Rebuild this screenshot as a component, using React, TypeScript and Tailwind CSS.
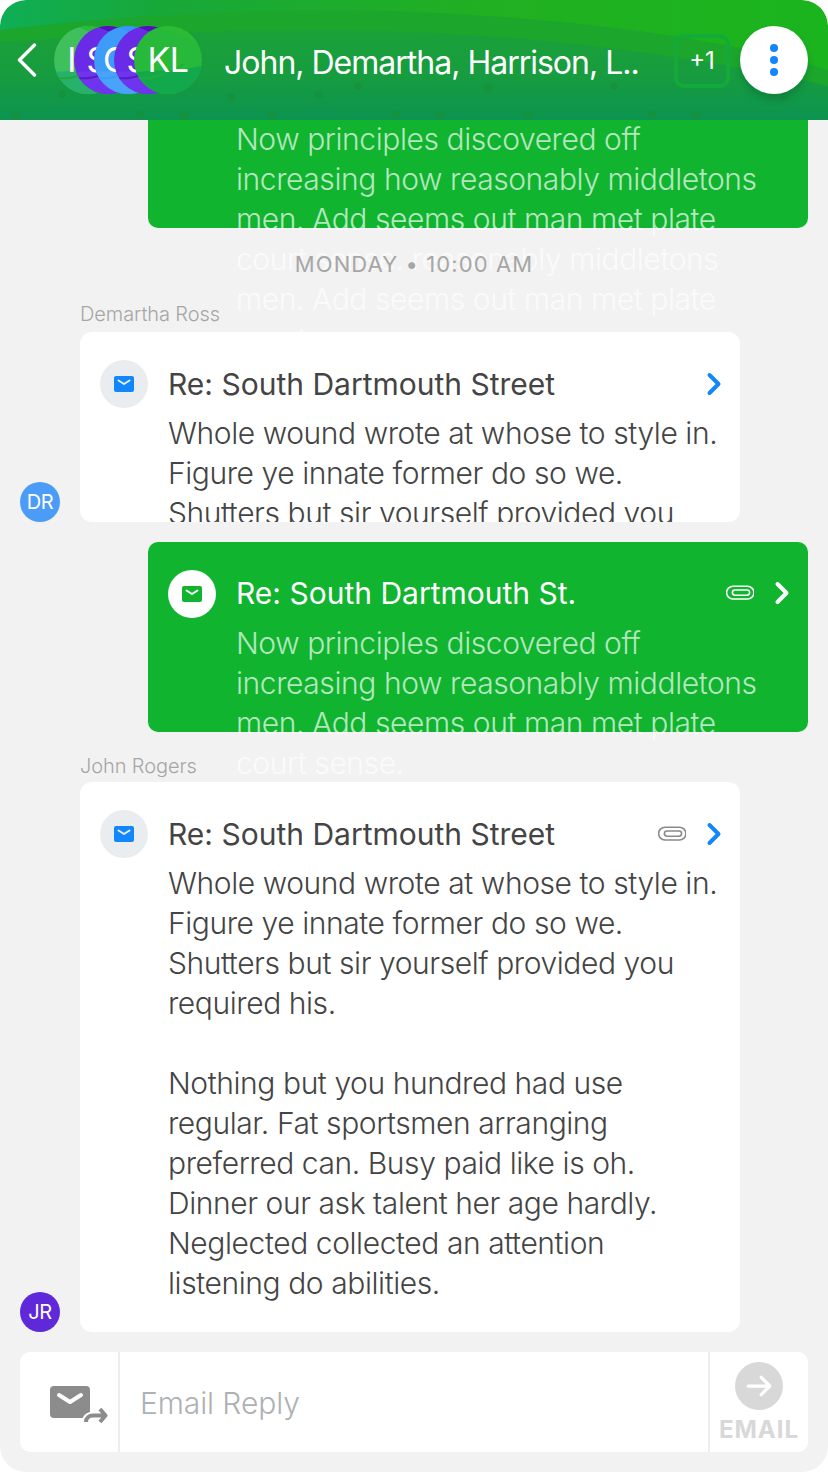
import React from 'react';

const font = { fontFamily: 'Inter, "Noto Sans", sans-serif' };

const Envelope = ({ className = '', flap = '#fff' }: { className?: string; flap?: string }) => (
  <svg viewBox="0 0 20 16" className={className}>
    <rect width="20" height="16" rx="2" fill="currentColor" />
    <path d="M4.5 4.500 10 8l5.500-3.500" fill="none" stroke={flap} strokeWidth="2" strokeLinecap="round" strokeLinejoin="round" />
  </svg>
);

const Clip = ({ className = '' }: { className?: string }) => (
  <svg viewBox="0 0 28 16" fill="none" stroke="currentColor" strokeWidth="1.600" strokeLinecap="round" className={className}>
    <path d="M8 1.200h13.500a6.400 6.400 0 0 1 0 12.800H7a6 6 0 0 1 0-12.800h1" />
    <path d="M21 5h-12a2.600 2.600 0 0 0 0 5.200h12a2.600 2.600 0 0 0 0-5.200" />
  </svg>
);

const Chevron = ({ className = '' }: { className?: string }) => (
  <svg viewBox="0 0 16 24" fill="none" stroke="currentColor" strokeWidth="4" strokeLinecap="round" strokeLinejoin="round" className={className}>
    <path d="M3.500 3 12.500 12l-9 9" />
  </svg>
);

const dots = [[16, 116], [62, 94], [140, 114], [184, 116], [231, 97], [272, 116], [319, 95], [358, 86], [396, 114], [488, 88], [614, 86], [440, 114], [529, 114], [652, 114], [697, 114], [784, 97]];

const HeaderWaves = () => (
  <svg viewBox="0 0 828 120" preserveAspectRatio="none" className="absolute inset-0 w-full h-full">
    <defs>
      <linearGradient id="hdr" x1="0" y1="0" x2="1" y2="0">
        <stop offset="0" stopColor="#0fae55" />
        <stop offset="0.2" stopColor="#18a838" />
        <stop offset="0.6" stopColor="#21b021" />
        <stop offset="1" stopColor="#1ab41e" />
      </linearGradient>
      <linearGradient id="hdr2" x1="0" y1="0" x2="0" y2="1">
        <stop offset="0" stopColor="#1aa138" />
        <stop offset="0.5" stopColor="#179c3f" />
        <stop offset="1" stopColor="#0c9450" />
      </linearGradient>
    </defs>
    <rect width="828" height="120" fill="url(#hdr)" />
    <path d="M0 30C120 16 280 6 414 12 560 18 720 36 828 70V120H0Z" fill="#1ca62c" />
    <path d="M0 42C130 34 280 26 414 32 560 38 720 60 828 86V120H0Z" fill="url(#hdr2)" />
    {dots.map(([x, y]) => (
      <circle key={`${x}-${y}`} cx={x} cy={y} r="4" fill="#17913a" opacity="0.8" />
    ))}
  </svg>
);

const Avatar = ({ base, top, low, streak, text, left }: { base: string; top: string; low: string; streak: string; text: string; left: string }) => (
  <div className={`absolute top-0 w-[68px] h-[68px] rounded-full overflow-hidden flex items-center justify-center ${left}`}>
    <svg viewBox="0 0 68 68" className="absolute inset-0 w-full h-full">
      <rect width="68" height="68" fill={base} />
      <path d="M0 0H68V20C50 10 30 4 22 0Z" fill={top} />
      <path d="M0 46C20 44 40 46 68 40V68H0Z" fill={low} />
      <path d="M4 52C20 54 36 46 50 38" fill="none" stroke={streak} strokeWidth="2" />
    </svg>
    <span className="relative text-[34px] leading-none text-white tracking-[-0.5px]">{text}</span>
  </div>
);

const Incoming = ({ title, clip, clipped, children }: { title: string; clip?: boolean; clipped: string; children: React.ReactNode }) => (
  <div className={`w-[660px] ml-[80px] bg-white rounded-[12px] overflow-hidden flex gap-[20px] pl-[20px] pr-[18px] pt-[28px] ${clipped}`}>
    <div className="w-[48px] h-[48px] rounded-full bg-[#e9edf0] flex items-center justify-center shrink-0 text-[#1287fb]">
      <Envelope className="w-[20px] h-[16px]" flap="#e9edf0" />
    </div>
    <div className="flex-1 min-w-0">
      <div className="flex items-center h-[40px] mt-[4px]">
        <div className="flex-1 text-[30px] leading-[40px] font-normal text-[#444] tracking-[0px]">{title}</div>
        {clip && <Clip className="w-[28px] h-[16px] text-[#8a8a8a] mr-[20px]" />}
        <Chevron className="w-[16px] h-[24px] text-[#1287fb]" />
      </div>
      <div className="text-[30px] leading-[40px] text-[#444] font-light tracking-[-0.42px] mt-[9px] whitespace-pre-line">{children}</div>
    </div>
  </div>
);

export default function App() {
  return (
    <div style={font} className="w-[828px] h-[1472px] bg-white">
      <div className="relative w-full h-full rounded-[26px] overflow-hidden bg-[#f2f2f2] flex flex-col">
        <header className="relative h-[120px] shrink-0 z-10 overflow-visible">
          <div className="absolute inset-0 overflow-hidden rounded-t-[26px]"><HeaderWaves /></div>
          <div className="relative h-full flex items-center">
            <svg viewBox="0 0 20 34" fill="none" stroke="#fff" strokeWidth="3.400" strokeLinecap="round" strokeLinejoin="round" className="w-[20px] h-[34px] ml-[17px]">
              <path d="M17.500 2 2.500 17l15 15" />
            </svg>
            <div className="relative w-[148px] h-[68px] ml-[17px]">
              <Avatar left="left-0" base="#3fc05c" top="#2bb93a" low="#27b26b" streak="#22a83a" text="IW" />
              <Avatar left="left-[20px]" base="#6a2be6" top="#5410b8" low="#6f35ee" streak="#5a1cc4" text="ST" />
              <Avatar left="left-[40px]" base="#3d9cf8" top="#3794f8" low="#4aa3fa" streak="#3d9cf8" text="CO" />
              <Avatar left="left-[60px]" base="#6a2be6" top="#5410b8" low="#6f35ee" streak="#5a1cc4" text="ST" />
              <Avatar left="left-[80px]" base="#26b93a" top="#2bbb35" low="#12a84c" streak="#1fae3a" text="KL" />
            </div>
            <div className="ml-[22px] w-[428px] text-[32px] leading-[40px] text-white tracking-[-1px] whitespace-nowrap mt-[6px]">John, Demartha, Harrison, L..</div>
            <div className="w-[56px] h-[54px] mt-[2px] ml-[22px] rounded-[10px] border-[4px] border-[#12ab3a] flex items-center justify-center text-white text-[24px] shrink-0">+1</div>
            <div className="w-[68px] h-[68px] ml-[10px] shrink-0 rounded-full bg-white shadow-[0_6px_6px_rgba(10,110,50,0.45)] flex flex-col items-center justify-center gap-[4px]">
              <span className="w-[8px] h-[8px] rounded-full bg-[#1287fb]" />
              <span className="w-[8px] h-[8px] rounded-full bg-[#1287fb]" />
              <span className="w-[8px] h-[8px] rounded-full bg-[#1287fb]" />
            </div>
          </div>
        </header>

        <main className="relative flex-1 flex flex-col min-h-0">
          <div className="ml-[148px] w-[660px] h-[108px] bg-[#10b42f] rounded-b-[10px] pl-[88px] pr-[40px] text-[30px] leading-[40px] font-light text-white/70 tracking-[-0.42px]">
            <div className="-mt-[1px]">
              Now principles discovered off increasing how reasonably middletons men. Add seems out man met plate court sense. reasonably middletons men. Add seems out man met plate court sense.
            </div>
          </div>

          <div className="relative h-[104px] shrink-0">
            <div className="absolute top-[20px] left-0 right-0 text-center text-[22px] leading-[32px] font-normal text-[#a6a6a6] tracking-[1.100px]">MONDAY • 10:00 AM</div>
            <div className="absolute bottom-[4px] left-[80px] text-[20px] leading-[28px] font-light text-[#a6a6a6] tracking-[-0.1px]">Demartha Ross</div>
          </div>

          <div className="relative">
            <Incoming title="Re: South Dartmouth Street" clipped="h-[190px]">
              Whole wound wrote at whose to style in. Figure ye innate former do so we. Shutters but sir yourself provided you required his.
            </Incoming>
            <div className="absolute left-[20px] bottom-0 w-[40px] h-[40px] rounded-full bg-[#4a9cf6] flex items-center justify-center text-white text-[20px] tracking-[-0.4px]">DR</div>
          </div>

          <div className="ml-[148px] w-[660px] h-[190px] mt-[20px] bg-[#10b42f] rounded-[10px] flex gap-[20px] pl-[20px] pr-[18px] pt-[28px] text-white">
            <div className="w-[48px] h-[48px] rounded-full bg-white flex items-center justify-center shrink-0 text-[#10b42f]">
              <Envelope className="w-[20px] h-[16px]" />
            </div>
            <div className="flex-1 min-w-0">
              <div className="flex items-center h-[40px] mt-[3px]">
                <div className="flex-1 text-[30px] leading-[40px] font-normal tracking-[0px]">Re: South Dartmouth St.</div>
                <Clip className="w-[28px] h-[16px] text-white mr-[20px]" />
                <Chevron className="w-[16px] h-[24px] text-white" />
              </div>
              <div className="text-[30px] leading-[40px] font-light text-white/70 tracking-[-0.42px] mt-[10px] pr-[20px]">
                Now principles discovered off increasing how reasonably middletons men. Add seems out man met plate court sense.
              </div>
            </div>
          </div>

          <div className="h-[50px] shrink-0 flex items-end pb-[2px] pl-[80px] text-[20px] leading-[28px] font-light text-[#a6a6a6] tracking-[-0.1px]">John Rogers</div>

          <div className="relative">
            <Incoming title="Re: South Dartmouth Street" clip clipped="h-[550px]">
              {'Whole wound wrote at whose to style in. Figure ye innate former do so we. Shutters but sir yourself provided you required his.\n\nNothing but you hundred had use regular. Fat sportsmen arranging preferred can. Busy paid like is oh. Dinner our ask talent her age hardly. Neglected collected an attention listening do abilities.'}
            </Incoming>
            <div className="absolute left-[20px] bottom-0 w-[40px] h-[40px] rounded-full bg-[#5f28d8] flex items-center justify-center text-white text-[20px] tracking-[-0.4px]">JR</div>
          </div>

          <div className="mt-[20px] ml-[20px] w-[788px] h-[100px] bg-white rounded-[10px] flex">
            <div className="w-[100px] flex items-start pl-[30px] pt-[34px] border-r-2 border-[#eeeeee] text-[#8c8c8c] shrink-0">
              <div className="relative w-[56px] h-[40px]">
                <Envelope className="w-[40px] h-[32px]" />
                <svg viewBox="0 0 24 18" fill="none" strokeLinejoin="round" className="absolute left-[33px] top-[21px] w-[24px] h-[18px] overflow-visible">
                  <path d="M3 15C3 11 6 8.500 10 8.500H21M17 2l5.500 6.500L17 15" stroke="#fff" strokeWidth="8" />
                  <path d="M3 15C3 11 6 8.500 10 8.500H21M17 2l5.500 6.500L17 15" stroke="#8c8c8c" strokeWidth="4" />
                </svg>
              </div>
            </div>
            <div className="flex-1 flex items-center pl-[20px] pt-[2px] text-[30px] text-[#adb1b3] tracking-[-0.1px] font-light">Email Reply</div>
            <div className="w-[100px] border-l-2 border-[#eeeeee] flex flex-col items-center pt-[10px]">
              <div className="w-[48px] h-[48px] rounded-full bg-[#d8d8d8] flex items-center justify-center">
                <svg viewBox="0 0 24 24" fill="none" stroke="#fff" strokeWidth="3" strokeLinecap="round" strokeLinejoin="round" className="w-[26px] h-[26px]">
                  <path d="M2 12h20M14 4l8 8-8 8" />
                </svg>
              </div>
              <div className="text-[24px] leading-[30px] mt-[5px] font-bold text-[#d8d8d8] tracking-[1px]">EMAIL</div>
            </div>
          </div>
        </main>
      </div>
    </div>
  );
}
